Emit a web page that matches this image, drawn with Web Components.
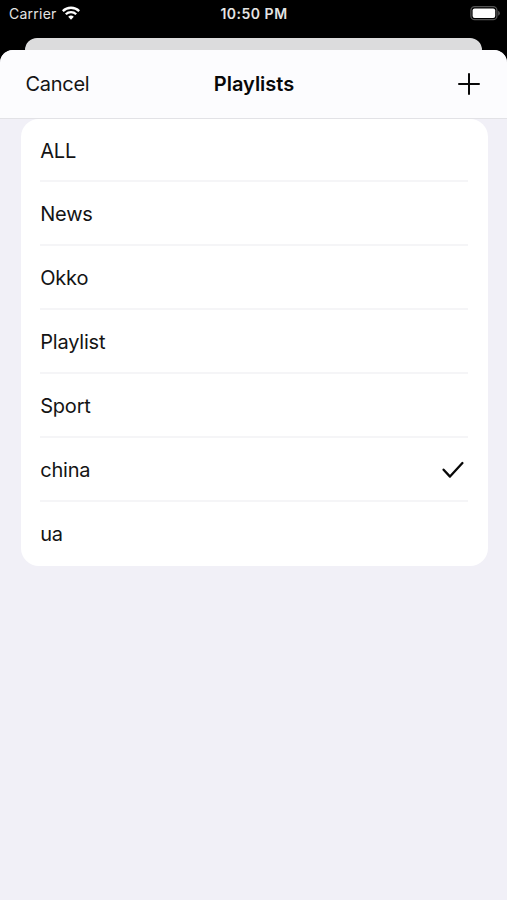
<!DOCTYPE html>
<html lang="en">
<head>
<meta charset="utf-8">
<title>Playlists</title>
<style>
  html, body { margin: 0; height: 100%; background: #000; overflow: hidden; }
  body { font-family: Inter, "Liberation Sans", sans-serif; color: #141414; }
</style>
</head>
<body>
<playlist-app></playlist-app>
<script>
  const define = (name, markup) => {
    const template = document.createElement('template');
    template.innerHTML = markup;
    customElements.define(name, class extends HTMLElement {
      constructor() {
        super();
        this.attachShadow({ mode: 'open' }).append(template.content.cloneNode(true));
      }
    });
  };

  define('status-bar', `
    <style>
      :host { display: grid; grid-template-columns: 1fr auto 1fr; align-items: center; height: 26px; padding: 0 7px 2px 9px; color: #e4e4e4; }
      .left { display: flex; align-items: center; gap: 5px; font-size: 14px; letter-spacing: .25px; }
      .time { font-size: 14px; font-weight: 600; letter-spacing: .5px; margin-right: 1px; }
      .battery { justify-self: end; }
      svg { display: block; }
    </style>
    <div class="left"><span>Carrier</span>
      <svg width="18" height="14" viewBox="0 0 18 14" fill="none" stroke="#fff" stroke-width="2.3">
        <path d="M.8 5.1a11.7 11.7 0 0 1 16.4 0M3.8 8.2a7.4 7.4 0 0 1 10.4 0"/>
        <path d="M9 13.7 6.2 10.8a4 4 0 0 1 5.6 0Z" fill="#fff" stroke="none"/>
      </svg>
    </div>
    <span class="time">10:50 PM</span>
    <svg class="battery" width="30" height="15" viewBox="0 0 30 15">
      <rect x=".9" y=".7" width="26" height="13" rx="3.8" fill="none" stroke="#545454" stroke-width="1.3"/>
      <rect x="2.6" y="2.4" width="22.6" height="9.6" rx="2" fill="#fff"/>
      <path d="M28.1 4.7q1.8.9 1.8 2.5t-1.8 2.5Z" fill="#545454"/>
    </svg>`);

  define('nav-header', `
    <style>
      :host { display: grid; grid-template-columns: 1fr auto 1fr; align-items: center; box-sizing: border-box; height: 69px; padding: 0 27px 0 25.5px; border-bottom: 1px solid #e2e2e6; background: #fcfcfe; font-size: 20px; }
      .title { margin-left: 2.5px; font-weight: 600; color: #080808; }
      .action { justify-self: end; display: flex; }
      ::slotted([slot=cancel]) { letter-spacing: -.3px; }
      ::slotted([slot=title]) { letter-spacing: -.02px; }
    </style>
    <slot name="cancel"></slot>
    <span class="title"><slot name="title"></slot></span>
    <span class="action"><svg width="22" height="22" viewBox="0 0 22 22" stroke="#080808" stroke-width="2" stroke-linecap="round"><path d="M11 1v20M1 11h20"/></svg></span>`);

  define('playlist-row', `
    <style>
      :host { display: flex; align-items: center; justify-content: space-between; box-sizing: border-box; height: 64px; margin: 0 20px 0 19.7px; padding: 2px 4px 0 0; border-bottom: 2px solid #f5f5f7; font-size: 20px; letter-spacing: -.2px; }
      :host(:first-child) { height: 63px; }
      :host(:last-child) { border-bottom-color: transparent; }
      .check { display: none; }
      :host([selected]) .check { display: block; }
    </style>
    <slot></slot>
    <svg class="check" width="22" height="18" viewBox="0 0 22 18" fill="none" stroke="#080808" stroke-width="2.3" stroke-linecap="round" stroke-linejoin="round"><path d="M1.6 8.7 8 15.6 20.4 2"/></svg>`);

  define('playlist-card', `
    <style>
      :host { display: block; margin: 0 19.5px 0 20.5px; border-radius: 18px; background: #fff; overflow: hidden; }
    </style>
    <slot></slot>`);

  define('sheet-panel', `
    <style>
      :host { display: flex; flex-direction: column; flex: 1; border-radius: 13px 13px 0 0; background: #f1f0f7; overflow: hidden; }
    </style>
    <slot></slot>`);

  define('playlist-app', `
    <style>
      :host { display: flex; flex-direction: column; width: 507px; height: 900px; background: #000; }
      .behind { flex: none; height: 12px; margin: 10px 25px 0; border-radius: 12px 12px 0 0; background: #dcdcdd; }
    </style>
    <status-bar></status-bar>
    <div class="behind"></div>
    <sheet-panel>
      <nav-header>
        <span slot="cancel">Cancel</span>
        <span slot="title">Playlists</span>
      </nav-header>
      <playlist-card>
        <playlist-row>ALL</playlist-row>
        <playlist-row>News</playlist-row>
        <playlist-row>Okko</playlist-row>
        <playlist-row>Playlist</playlist-row>
        <playlist-row>Sport</playlist-row>
        <playlist-row selected>china</playlist-row>
        <playlist-row>ua</playlist-row>
      </playlist-card>
    </sheet-panel>
  `);
</script>
</body>
</html>
